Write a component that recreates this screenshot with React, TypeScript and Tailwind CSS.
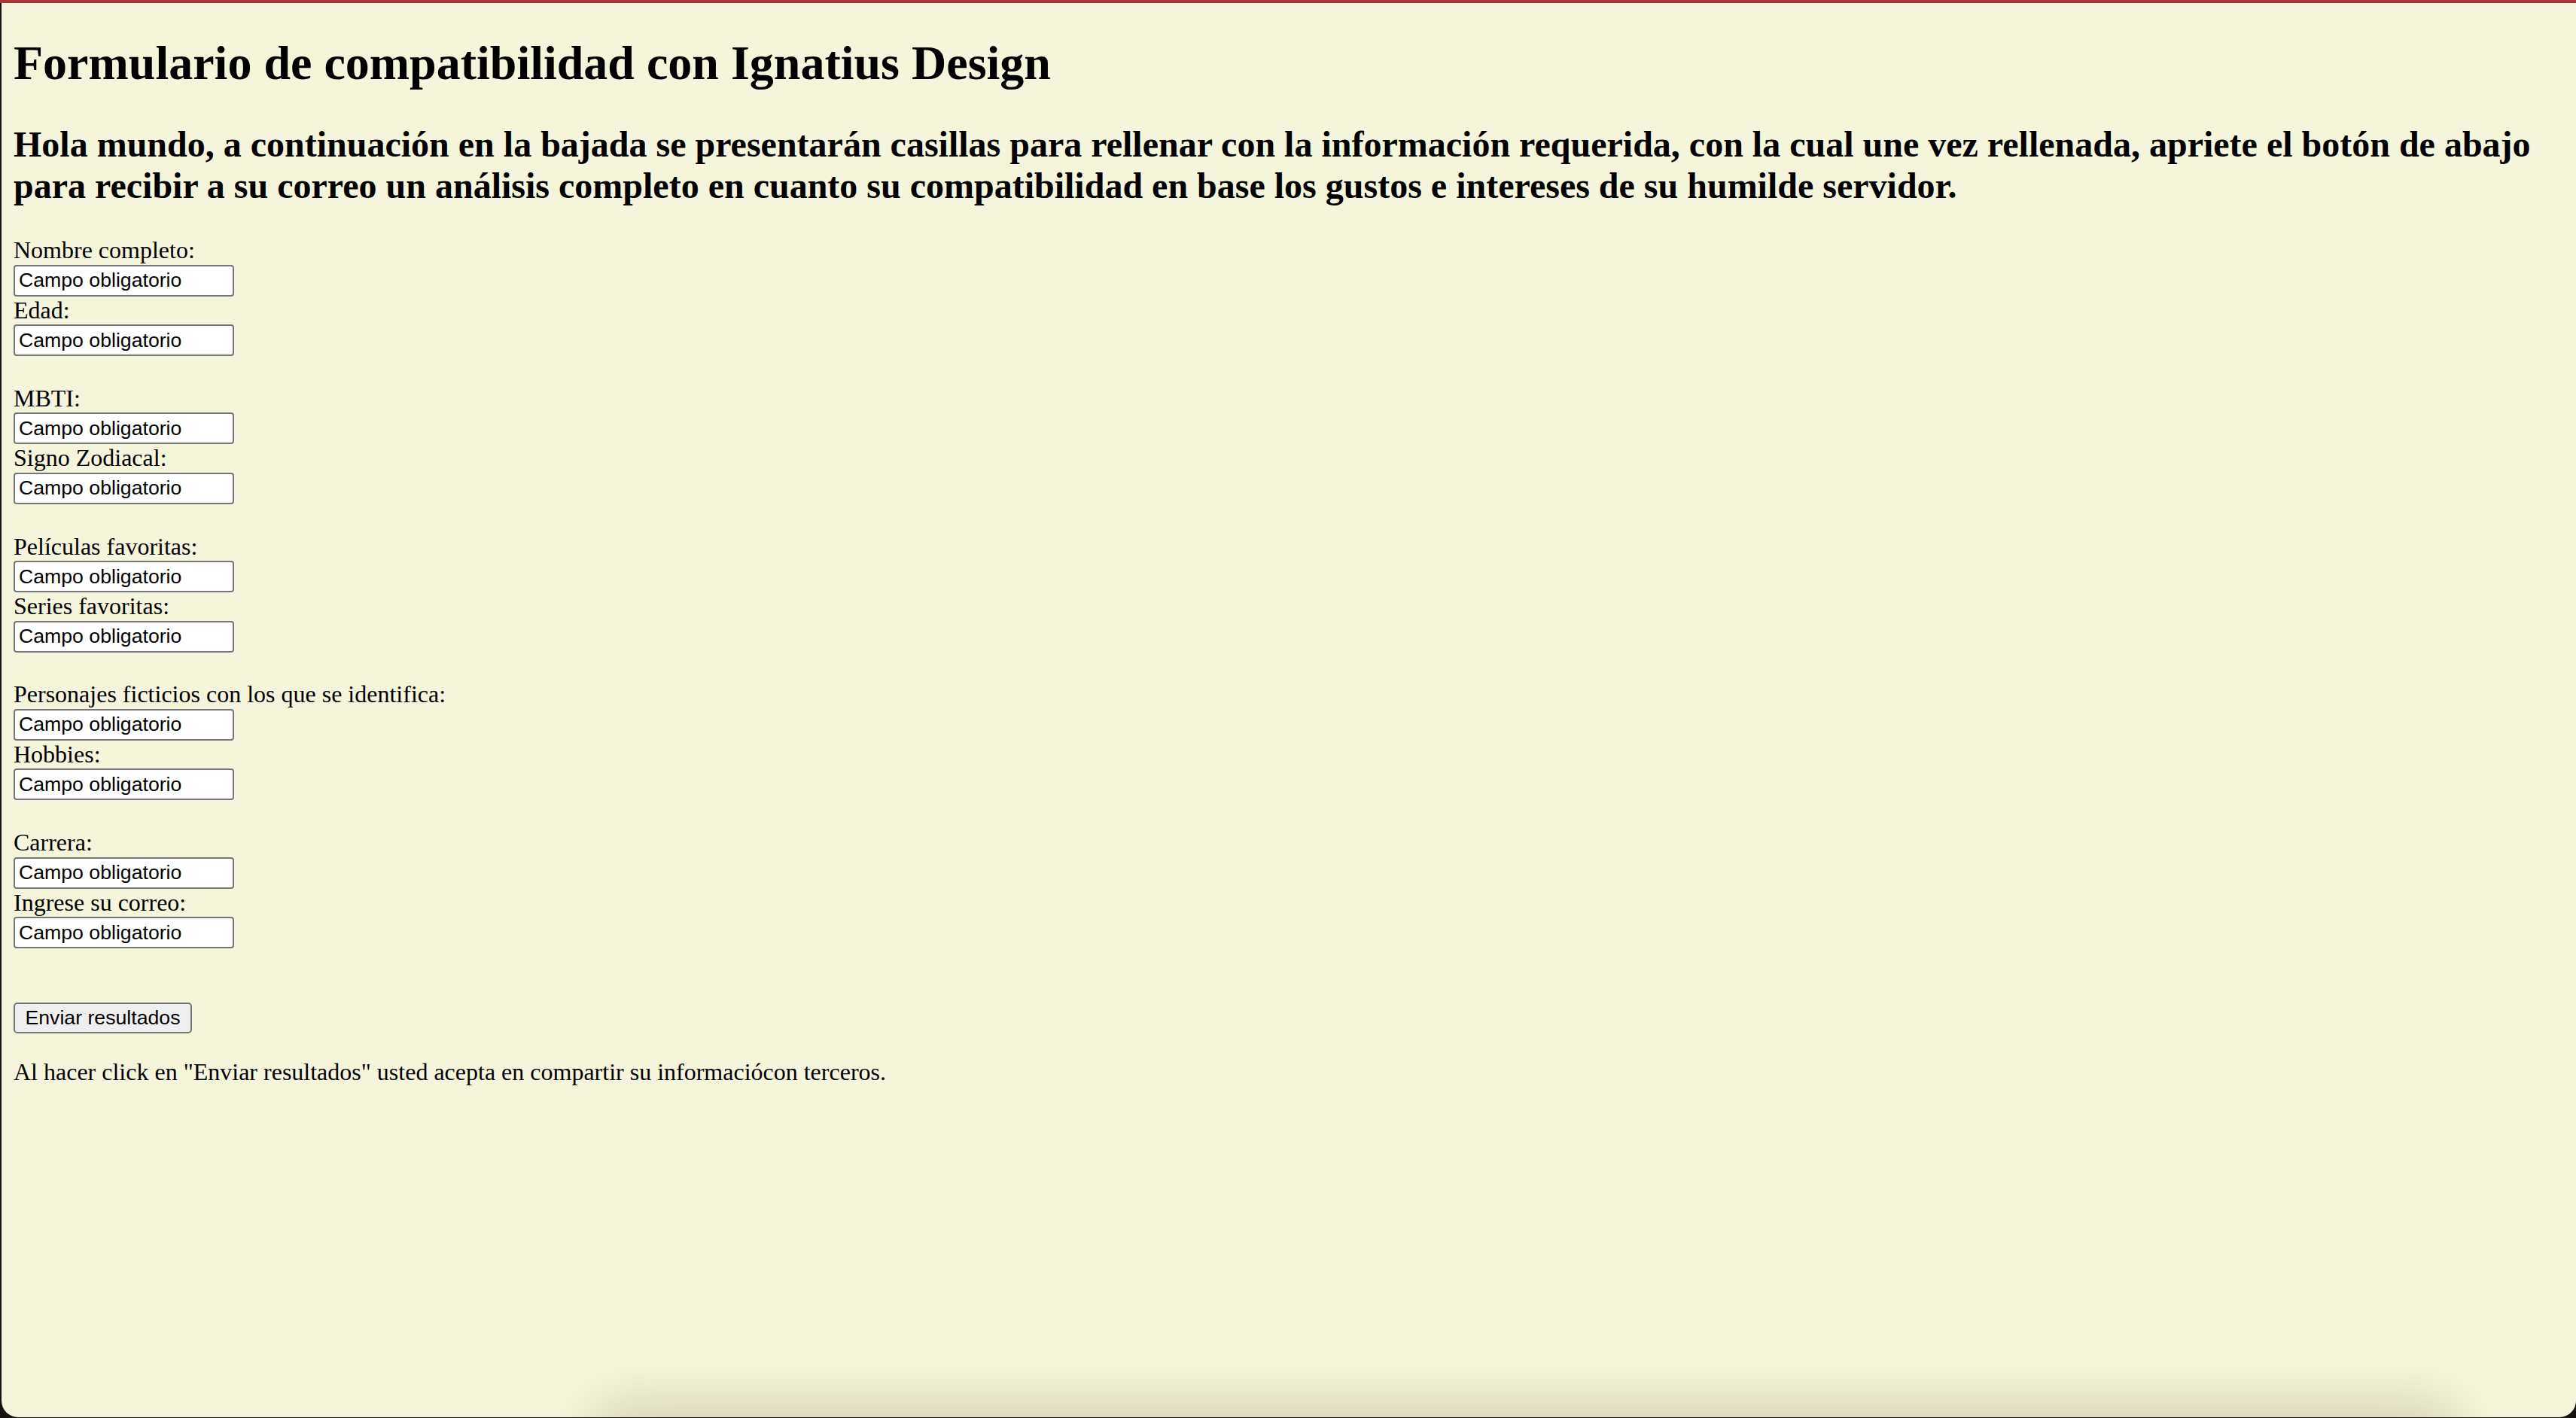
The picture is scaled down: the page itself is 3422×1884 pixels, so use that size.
import React from "react";

const serif = "font-['Liberation_Serif','Times_New_Roman',serif]";

function Field({ label }: { label: string }) {
  return (
    <>
      <div className={`h-[37.5px] text-[32px] leading-[37.5px] whitespace-nowrap ${serif}`}>{label}</div>
      <div className="h-[42px]">
        <input
          type="text"
          readOnly
          defaultValue="Campo obligatorio"
          className="box-border block h-[42px] w-[293px] rounded-[4px] border-2 border-solid border-[#767676] bg-white px-[5px] py-0 font-['Liberation_Sans',Arial,sans-serif] text-[26.67px] leading-[normal] text-black outline-none"
        />
      </div>
    </>
  );
}

const groups: [string, string][] = [
  ["Nombre completo:", "Edad:"],
  ["MBTI:", "Signo Zodiacal:"],
  ["Películas favoritas:", "Series favoritas:"],
  ["Personajes ficticios con los que se identifica:", "Hobbies:"],
  ["Carrera:", "Ingrese su correo:"],
];

export default function App() {
  return (
    <div className="flex h-[1884px] w-full flex-col overflow-hidden bg-[#17120f]">
      <div className="h-[4px] w-full shrink-0 bg-[#a63a3a]" />
      <div className="relative mb-[1px] ml-[2px] flex flex-1 flex-col overflow-hidden rounded-b-[22px] bg-[#f5f5dc] px-[16px] text-black">
        <h1 className={`mt-[43px] text-[64px] font-bold leading-[73.6px] whitespace-nowrap ${serif}`}>
          Formulario de compatibilidad con Ignatius Design
        </h1>
        <h2 className={`mt-[43px] text-[48px] font-bold leading-[55.2px] ${serif}`}>
          Hola mundo, a continuación en la bajada se presentarán casillas para rellenar con la información requerida, con la cual une vez rellenada, apriete el botón de abajo para recibir a su correo un análisis completo en cuanto su compatibilidad en base los gustos e intereses de su humilde servidor.
        </h2>
        <form className="mt-[40px] flex flex-col" onSubmit={(e) => e.preventDefault()}>
          {groups.map(([a, b], i) => (
            <div key={i} className="flex flex-col">
              <Field label={a} />
              <Field label={b} />
              {i < groups.length - 1 && <div className="h-[37.8px]" />}
            </div>
          ))}
          <div className="mt-[71.5px]">
            <button
              type="submit"
              className="box-border h-[41px] w-[237px] rounded-[5px] border-2 border-solid border-[#767676] bg-[#efefef] px-0 font-['Liberation_Sans',Arial,sans-serif] text-[26.67px] leading-[normal] text-black"
            >
              Enviar resultados
            </button>
          </div>
        </form>
        <p className={`mt-[33px] text-[32px] leading-[36.8px] whitespace-nowrap ${serif}`}>
          Al hacer click en "Enviar resultados" usted acepta en compartir su informaciócon terceros.
        </p>
        <div className="pointer-events-none absolute bottom-[-60px] left-[800px] right-[170px] h-[60px] rounded-[30px] shadow-[0_0_70px_22px_rgba(90,80,30,0.2)]" />
      </div>
    </div>
  );
}
